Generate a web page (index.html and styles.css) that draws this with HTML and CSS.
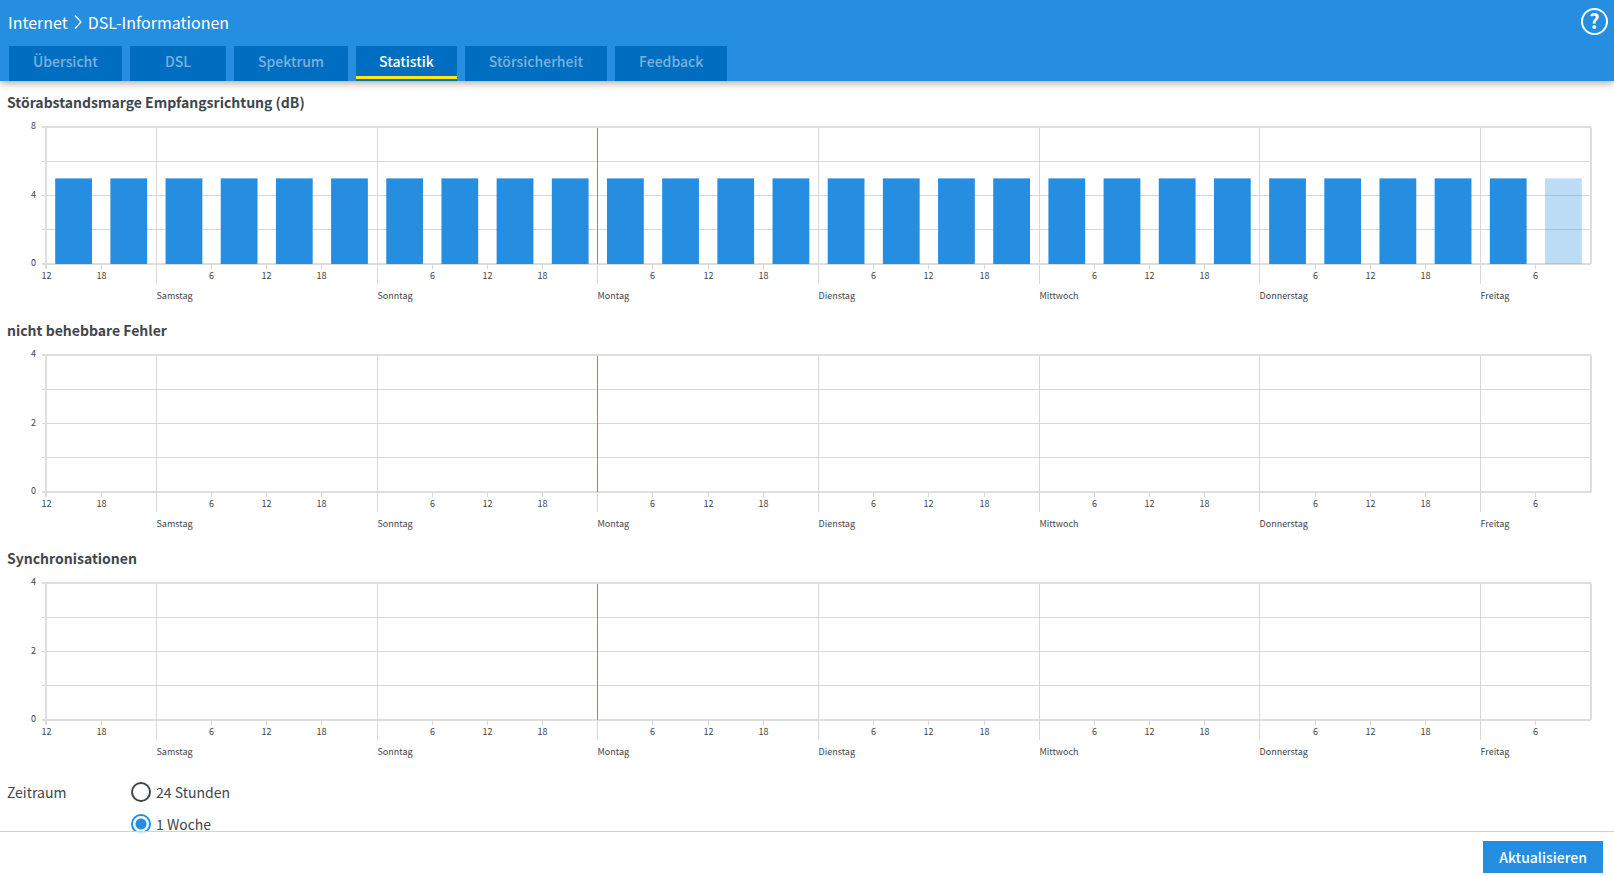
FILE: index.html
```
<!DOCTYPE html>
<html lang="de">
<head>
  <meta charset="UTF-8" />
  <meta name="viewport" content="width=device-width, initial-scale=1.0"/>
  <title>DSL-Informationen</title>
  <link rel="stylesheet" href="styles.css">
</head>

<body>
  <header class="page-header">
    <div class="title-row">
      <div class="breadcrumb">
        <a href="#">Internet</a>
        <svg class="chevron" width="8" height="16" viewBox="0 0 8 16" aria-hidden="true"><path d="M1 1.5 7 8 1 14.5"/></svg>
        <span>DSL-Informationen</span>
      </div>
      <a class="help" href="#" aria-label="Hilfe">?</a>
    </div>
    <nav class="tabs">
      <a href="#">Übersicht</a>
      <a href="#" class="wide">DSL</a>
      <a href="#">Spektrum</a>
      <a href="#" class="active">Statistik</a>
      <a href="#">Störsicherheit</a>
      <a href="#">Feedback</a>
    </nav>
  </header>

  <main>
    <section>
      <h2>Störabstandsmarge Empfangsrichtung (dB)</h2>
      <svg class="chart" data-max="8" data-value="5"></svg>
    </section>
    <section>
      <h2>nicht behebbare Fehler</h2>
      <svg class="chart" data-max="4" data-value="0"></svg>
    </section>
    <section>
      <h2>Synchronisationen</h2>
      <svg class="chart" data-max="4" data-value="0"></svg>
    </section>

    <form class="period" id="periodForm">
      <span class="period-label" id="periodLabel">Zeitraum</span>
      <div class="options" role="radiogroup" aria-labelledby="periodLabel">
        <div class="option">
          <input type="radio" name="period" id="period24" value="24h">
          <label for="period24">24 Stunden</label>
        </div>
        <div class="option">
          <input type="radio" name="period" id="periodWeek" value="week" checked>
          <label for="periodWeek">1 Woche</label>
        </div>
      </div>
    </form>
  </main>

  <footer>
    <button type="submit" form="periodForm">Aktualisieren</button>
  </footer>

  <script src="chart.js"></script>
</body>
</html>
```

FILE: styles.css
```
* { box-sizing:border-box; }
body { margin:0; font-family:'Noto Sans CJK SC','Open Sans',sans-serif; font-size:14px; line-height:24px; background:white; color:#3f464c; }

.page-header { background:#268ee0; color:white; box-shadow:0 2px 8px rgba(0,0,0,0.35); }
.title-row { display:flex; justify-content:space-between; align-items:flex-start; height:46px; padding:8px 6px 0 8px; }
.breadcrumb { display:flex; align-items:center; gap:6px; height:28px; font-size:16px; }
.breadcrumb a { color:white; text-decoration:none; }
.chevron { fill:none; stroke:white; stroke-width:1.3; }
.help { width:27px; height:27px; border:2px solid white; border-radius:50%; color:white; font-size:20px; font-weight:bold; line-height:22px; text-align:center; text-decoration:none; }

.tabs { display:flex; gap:8px; padding:0 9px; }
.tabs a { height:35px; padding:0 24px; background:#006ec0; color:#79b2df; font-weight:500; line-height:31px; text-decoration:none; }
.tabs a.wide { padding:0 35px; }
.tabs a.active { height:33px; padding:0 23px; border-bottom:3px solid #ffe90f; box-shadow:0 2px #006ec0; color:white; font-weight:500; }

main { padding:10px 7px 0; }
h2 { margin:0; padding-bottom:2px; font-size:14px; font-weight:bold; line-height:22px; }
.chart { display:block; width:100%; height:204px; overflow:visible; }
.chart text { font-size:9px; fill:#3f464c; }
.grid { stroke:#d6d8d9; stroke-width:1; }
.frame { stroke:#dedede; stroke-width:2; }
.week { stroke:#4a9fdb; stroke-width:1; }
.bar { fill:#268ee0; }
.bar.current { opacity:0.3; }

.period { display:flex; padding-top:1px; }
.period-label { width:124px; line-height:32px; }
.option { display:flex; align-items:center; gap:5px; height:32px; }
.option input { appearance:none; width:20px; height:20px; margin:0; border:2px solid #3f464c; border-radius:50%; background:white; }
.option input:checked { border-color:#268ee0; background:radial-gradient(circle, #268ee0 5px, white 6px); }

footer { position:fixed; left:0; right:0; bottom:0; display:flex; justify-content:flex-end; padding:9px 11px 3px; border-top:1px solid #d0d2d3; background:rgba(255,255,255,0.85); }
button { height:32px; padding:0 16px; border:none; background:#268ee0; color:white; font-family:inherit; font-size:14px; font-weight:500; cursor:pointer; }
```

FILE: chart.js
```
const DAYS = ["Samstag", "Sonntag", "Montag", "Dienstag", "Mittwoch", "Donnerstag", "Freitag"];
const SLOTS = 28; // one week in steps of 6 hours, starting at 12:00
const PLOT = { left: 39, right: 16, top: 12, height: 137 };

function add(svg, name, attrs, text) {
  const el = document.createElementNS("http://www.w3.org/2000/svg", name);
  for (const key in attrs) el.setAttribute(key, attrs[key]);
  if (text !== undefined) el.textContent = text;
  svg.appendChild(el);
}

function line(svg, cls, x1, y1, x2, y2) {
  add(svg, "line", { class: cls, x1, y1, x2, y2 });
}

function renderChart(svg) {
  svg.innerHTML = "";
  const max = Number(svg.dataset.max);
  const value = Number(svg.dataset.value);
  const left = PLOT.left;
  const right = Math.round(svg.getBoundingClientRect().width) - PLOT.right;
  const top = PLOT.top;
  const bottom = top + PLOT.height;
  const step = (right - left) / SLOTS;

  // horizontal lines and scale
  for (let i = 0; i <= 4; i++) {
    const y = bottom - PLOT.height * i / 4;
    const edge = i === 0 || i === 4;
    const lineY = edge ? y : Math.floor(y) + 0.5;
    line(svg, edge ? "frame" : "grid", left - 4, lineY, right, lineY);
    if (i % 2 === 0) {
      add(svg, "text", { x: left - 10, y: y + 2, "text-anchor": "end" }, max * i / 4);
    }
  }
  line(svg, "frame", left, top, left, bottom + 5);
  line(svg, "frame", right, top, right, bottom);

  // vertical lines, hours and days
  for (let i = 0; i < SLOTS; i++) {
    const x = Math.floor(left + i * step) + 0.5;
    const hour = (12 + i * 6) % 24;
    if (hour === 0) {
      const day = DAYS[(i - 2) / 4];
      line(svg, "grid", x, top, x, bottom + 20);
      if (day === "Montag") line(svg, "week", x, top + 1, x, bottom);
      add(svg, "text", { x: x, y: bottom + 35 }, day);
    } else {
      line(svg, "grid", x, bottom, x, bottom + 5);
      add(svg, "text", { x: x, y: bottom + 15, "text-anchor": "middle" }, hour);
    }
  }

  if (value === 0) return;
  for (let i = 0; i < SLOTS; i++) {
    const h = PLOT.height * value / max;
    add(svg, "rect", {
      class: i === SLOTS - 1 ? "bar current" : "bar",
      x: left + i * step + step / 6,
      y: bottom - h,
      width: step * 2 / 3,
      height: h
    });
  }
}

function renderAll() {
  document.querySelectorAll(".chart").forEach(renderChart);
}

window.addEventListener("resize", renderAll);
document.getElementById("periodForm").onsubmit = e => {
  e.preventDefault();
  renderAll();
};
renderAll();
```
